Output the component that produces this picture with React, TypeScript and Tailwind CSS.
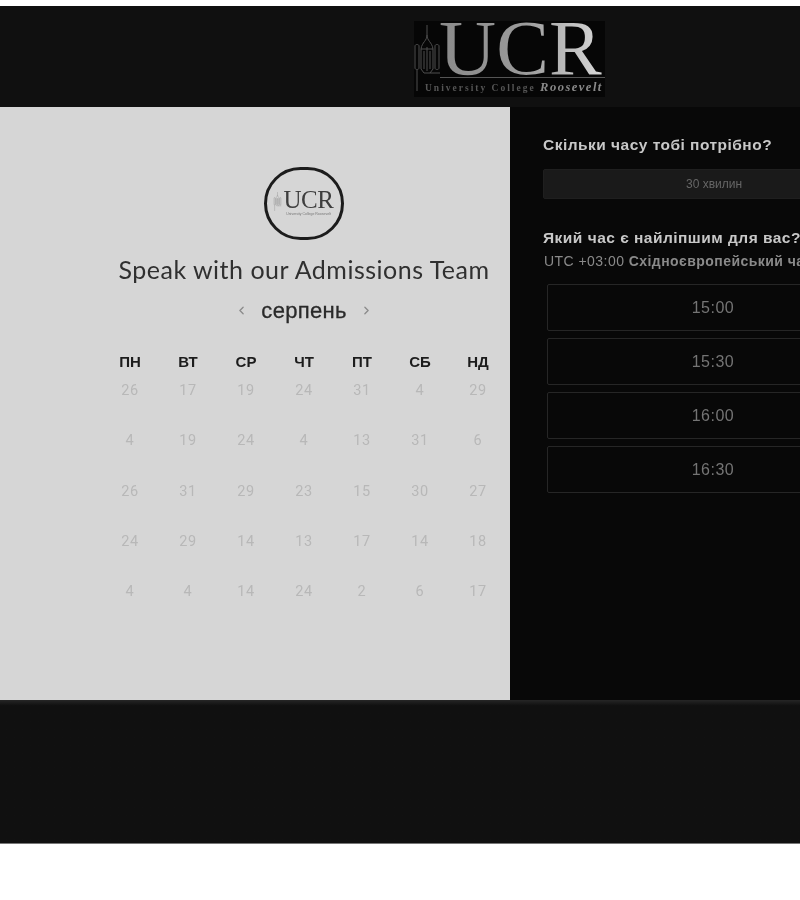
import { ChevronLeft, ChevronRight } from "lucide-react";

const rows = [
  [26, 17, 19, 24, 31, 4, 29],
  [4, 19, 24, 4, 13, 31, 6],
  [26, 31, 29, 23, 15, 30, 27],
  [24, 29, 14, 13, 17, 14, 18],
  [4, 4, 14, 24, 2, 6, 17],
];
const days = ["ПН", "ВТ", "СР", "ЧТ", "ПТ", "СБ", "НД"];
const slots = ["15:00", "15:30", "16:00", "16:30"];

// tower next to the letters of the logo
function Tower({ className }: { className: string }) {
  return (
    <svg viewBox="0 0 26 66" className={className} fill="none" stroke="currentColor" strokeWidth="1">
      <path d="M13 0V10M13 10C13 16 8 17 7 24V44M13 10C13 16 18 17 19 24V44M7 24H19M10 26V44M13 22V46M16 26V44" />
      <path d="M1 21C1 19 5 19 5 21V43C5 45 1 45 1 43ZM21 21C21 19 25 19 25 21V43C25 45 21 45 21 43Z" />
      <path d="M7 44L10 48H16L19 44M3 45V66M16 48H26" />
    </svg>
  );
}

function Logo() {
  return (
    <div className="relative flex h-[76px] w-[191px] flex-col overflow-hidden bg-[#060606]">
      <Tower className="absolute left-0 top-[4px] h-[66px] w-[26px] text-[#4e4e4e]" />
      <div className="ml-[25px] h-[56px] bg-gradient-to-r from-[#8a8a8a] via-[#9a9a9a] to-[#dadada] bg-clip-text font-['Liberation_Serif',serif] text-[79px] leading-[54px] tracking-[0.1px] text-transparent">
        UCR
      </div>
      <div className="ml-[26px] h-px w-[165px] bg-[#555555]" />
      <div className="ml-[11px] mt-[2px] whitespace-nowrap font-['Liberation_Serif',serif] text-[9.5px] font-bold leading-[14px] tracking-[2px] text-[#565656]">
        University College <span className="text-[12.5px] italic tracking-[1.5px] text-[#8a8a8a]">Roosevelt</span>
      </div>
    </div>
  );
}

function SmallLogo() {
  return (
    <div className="flex h-[73px] w-[80px] items-center justify-center rounded-full border-[3px] border-[#1c1c1c]">
      <div className="relative -mt-[4px] flex flex-col items-center pl-[9px]">
        <Tower className="absolute left-[-1px] top-[4px] h-[19px] w-[9px] text-[#777777]" />
        <div className="font-['Liberation_Serif',serif] text-[25px] leading-[24px] tracking-[-0.4px] text-[#3e3e3e]">UCR</div>
        <div className="whitespace-nowrap text-[3.5px] leading-[4px] text-[#777777]">University College Roosevelt</div>
      </div>
    </div>
  );
}

export default function App() {
  return (
    <div className="h-[900px] w-[800px] overflow-hidden bg-white pt-[6px] font-['Liberation_Sans',Arial,sans-serif] blur-[0.4px]">
      <header className="flex h-[101px] w-[800px] items-start bg-[#101010] pl-[414px] pt-[15px]">
        <Logo />
      </header>

      <main className="flex h-[593px] w-[800px]">
        <section className="flex w-[510px] shrink-0 flex-col items-center bg-[#d6d6d6] pl-[101px] pr-[3px] pt-[60px]">
          <SmallLogo />
          <h1 className="mt-[14px] whitespace-nowrap font-['Lato',sans-serif] text-[25px] leading-[30px] tracking-[0.5px] text-[#303030]">
            Speak with our Admissions Team
          </h1>
          <div className="mt-[11px] flex h-[30px] items-center gap-[13px]">
            <ChevronLeft size={13} strokeWidth={2.5} className="text-[#8c8c8c]" />
            <span className="text-[22px] tracking-[0.3px] text-[#2a2a2a] [-webkit-text-stroke:0.3px_#2a2a2a]">серпень</span>
            <ChevronRight size={13} strokeWidth={2.5} className="text-[#8c8c8c]" />
          </div>
          <div className="mt-[27px] grid w-[406px] grid-cols-7 text-center">
            {days.map((d) => (
              <div key={d} className="h-[20px] text-[15px] font-bold leading-[20px] text-[#1c1c1c]">
                {d}
              </div>
            ))}
          </div>
          <div className="grid w-[406px] grid-cols-7 pt-[10px] text-center">
            {rows.flat().map((n, i) => (
              <div key={i} className="h-[50.25px] font-['Roboto',sans-serif] text-[14.5px] leading-[18px] tracking-[0.7px] text-[#b8b8b8]">
                {n}
              </div>
            ))}
          </div>
        </section>

        <section className="w-[380px] shrink-0 bg-[#080808] pl-[33px] pt-[28px]">
          <h2 className="text-[15.5px] font-bold leading-[20px] tracking-[0.48px] text-[#c8c8c8]">Скільки часу тобі потрібно?</h2>
          <div className="mt-[14px] flex h-[30px] w-[342px] items-center justify-center rounded-[2px] border border-[#1f1f1f] bg-[#1a1a1a] text-[12px] text-[#666666]">
            30 хвилин
          </div>
          <h2 className="mt-[29px] text-[15.5px] font-bold leading-[20px] tracking-[0.48px] text-[#c8c8c8]">Який час є найліпшим для вас?</h2>
          <p className="ml-[1px] mt-[4px] whitespace-nowrap text-[14px] leading-[18px] tracking-[0.45px] text-[#8a8a8a]">
            UTC +03:00 <span className="font-bold">Східноєвропейський час</span>
          </p>
          <div className="ml-[4px] mt-[14px] flex w-[332px] flex-col gap-[7px]">
            {slots.map((s) => (
              <div
                key={s}
                className="flex h-[47px] items-center justify-center rounded-[2px] border border-[#262626] text-[16px] tracking-[0.5px] text-[#747474]"
              >
                {s}
              </div>
            ))}
          </div>
        </section>
      </main>

      <footer className="h-[144px] w-[800px] border-b border-[#777777] bg-[#101010] bg-gradient-to-b from-[#262626] from-0% to-[#101010] to-[4%]" />
    </div>
  );
}
